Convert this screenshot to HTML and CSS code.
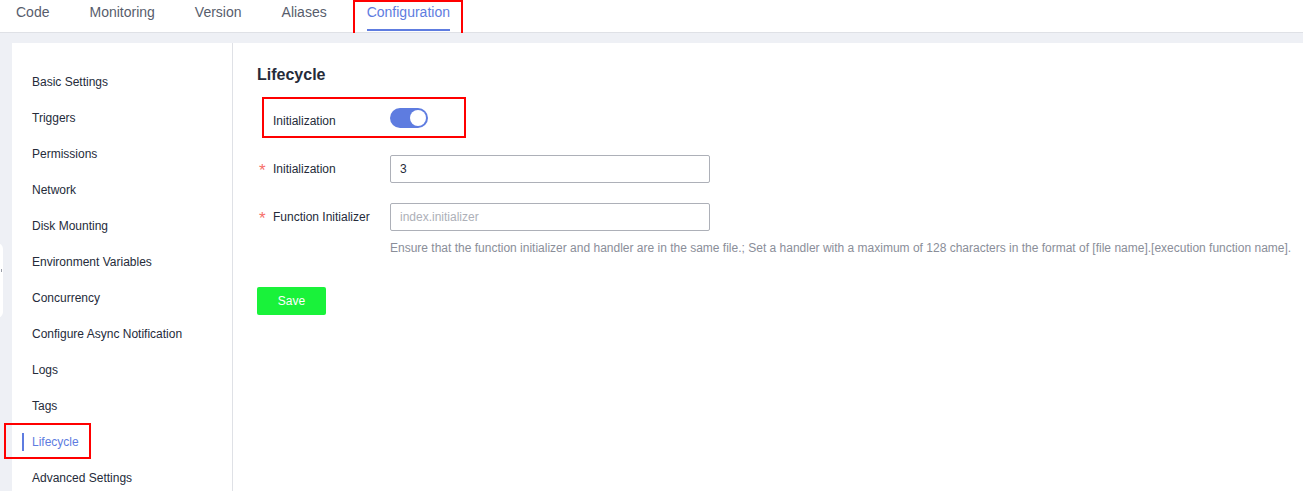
FILE: index.html
```html
<!DOCTYPE html>
<html lang="en">
<head>
<meta charset="utf-8">
<title>Configuration - Lifecycle</title>
<link rel="stylesheet" href="styles.css">
</head>
<body>
<div class="tabs">
  <div class="tab">Code</div>
  <div class="tab">Monitoring</div>
  <div class="tab">Version</div>
  <div class="tab">Aliases</div>
  <div class="tab active">Configuration<span class="mark mark-tab"></span></div>
</div>
<div class="main">
  <div class="handle"><span class="handle-dot"></span></div>
  <div class="card">
    <ul class="menu">
      <li class="menu-item">Basic Settings</li>
      <li class="menu-item">Triggers</li>
      <li class="menu-item">Permissions</li>
      <li class="menu-item">Network</li>
      <li class="menu-item">Disk Mounting</li>
      <li class="menu-item">Environment Variables</li>
      <li class="menu-item">Concurrency</li>
      <li class="menu-item">Configure Async Notification</li>
      <li class="menu-item">Logs</li>
      <li class="menu-item">Tags</li>
      <li class="menu-item active">Lifecycle<span class="mark mark-menu"></span></li>
      <li class="menu-item">Advanced Settings</li>
    </ul>
    <div class="content">
      <h2 class="title">Lifecycle</h2>
      <div class="row row-toggle">
        <span class="mark mark-row"></span>
        <label class="label">Initialization</label>
        <span class="switch"><span class="knob"></span></span>
      </div>
      <div class="row">
        <label class="label"><span class="req">*</span>Initialization</label>
        <input class="input" type="text" value="3">
      </div>
      <div class="row row-last">
        <label class="label"><span class="req">*</span>Function Initializer</label>
        <input class="input" type="text" placeholder="index.initializer">
      </div>
      <p class="help">Ensure that the function initializer and handler are in the same file.; Set a handler with a maximum of 128 characters in the format of [file name].[execution function name].</p>
      <button class="btn-save" type="button">Save</button>
    </div>
  </div>
</div>
</body>
</html>
```
FILE: styles.css
```css
* { box-sizing: border-box; }
html, body { margin: 0; padding: 0; }
body {
  font-family: "Liberation Sans", Arial, sans-serif;
  color: #252b3a;
  background: #fff;
  overflow: hidden;
}
.tabs {
  display: flex;
  gap: 40px;
  height: 33px;
  padding-left: 16px;
  border-bottom: 1px solid #dfe1e6;
  align-items: flex-start;
}
.tab {
  position: relative;
  height: 31px;
  padding-top: 4px;
  font-size: 14px;
  line-height: 16px;
  color: #575d6c;
  white-space: nowrap;
}
.tab.active {
  color: #5e7ce0;
  border-bottom: 2px solid #5e7ce0;
}
.mark {
  position: absolute;
  border: 2px solid #ff0000;
  pointer-events: none;
}
.mark-tab { left: -14px; right: -13px; top: 0; height: 37px; }
.main {
  position: relative;
  background: #eef0f5;
  padding: 10px 0 0 12px;
  height: 458px;
}
.handle {
  position: absolute;
  left: -9px;
  top: 210px;
  width: 12px;
  height: 75px;
  border-radius: 6px;
  background: #fff;
}
.handle-dot {
  position: absolute;
  right: 1px;
  top: 26px;
  width: 1px;
  height: 3px;
  background: #9a9ea8;
}
.card {
  display: flex;
  background: #fff;
  height: 100%;
}
.menu {
  list-style: none;
  margin: 0;
  padding: 21px 0 0;
  width: 221px;
  flex: none;
  border-right: 1px solid #dfe1e6;
}
.menu-item {
  position: relative;
  height: 36px;
  line-height: 36px;
  padding-left: 20px;
  font-size: 12px;
  color: #252b3a;
  white-space: nowrap;
}
.menu-item.active { color: #5e7ce0; }
.menu-item.active::before {
  content: "";
  position: absolute;
  left: 10px;
  top: 9px;
  width: 2px;
  height: 18px;
  background: #5e7ce0;
}
.mark-menu { left: -8px; top: -1px; width: 87px; height: 36px; }
.content {
  flex: 1;
  padding: 20px 0 0 24px;
}
.title {
  margin: 0 0 19px;
  font-size: 16px;
  line-height: 24px;
  font-weight: bold;
  color: #252b3a;
}
.row {
  position: relative;
  display: flex;
  align-items: center;
  height: 28px;
  margin-bottom: 20px;
}
.row-toggle { margin-bottom: 21px; }
.row-last { margin-bottom: 9px; }
.mark-row { left: 5px; top: -9px; width: 204px; height: 41px; }
.label {
  width: 133px;
  flex: none;
  padding-left: 16px;
  position: relative;
  font-size: 12px;
  color: #252b3a;
}
.row-toggle .label { padding-top: 2px; }
.req {
  position: absolute;
  left: 2px;
  top: -1px;
  color: #f66f6a;
  font-size: 17px;
  line-height: 20px;
}
.switch {
  position: relative;
  display: inline-block;
  width: 38px;
  height: 20px;
  border-radius: 10px;
  background: #5e7ce0;
  margin-top: -4px;
}
.knob {
  position: absolute;
  right: 2px;
  top: 2px;
  width: 16px;
  height: 16px;
  border-radius: 50%;
  background: #fff;
}
.input {
  width: 320px;
  height: 28px;
  border: 1px solid #adb0b8;
  border-radius: 2px;
  padding: 0 9px;
  font-family: inherit;
  font-size: 12px;
  color: #252b3a;
  outline: none;
}
.input::placeholder { color: #adb0b8; }
.help {
  margin: 0 0 31px 133px;
  font-size: 12px;
  line-height: 16px;
  color: #8a8e99;
  white-space: nowrap;
}
.btn-save {
  display: block;
  width: 69px;
  height: 28px;
  border: none;
  border-radius: 2px;
  background: #19f23a;
  color: #fff;
  font-family: inherit;
  font-size: 12px;
  padding: 0;
}
```
